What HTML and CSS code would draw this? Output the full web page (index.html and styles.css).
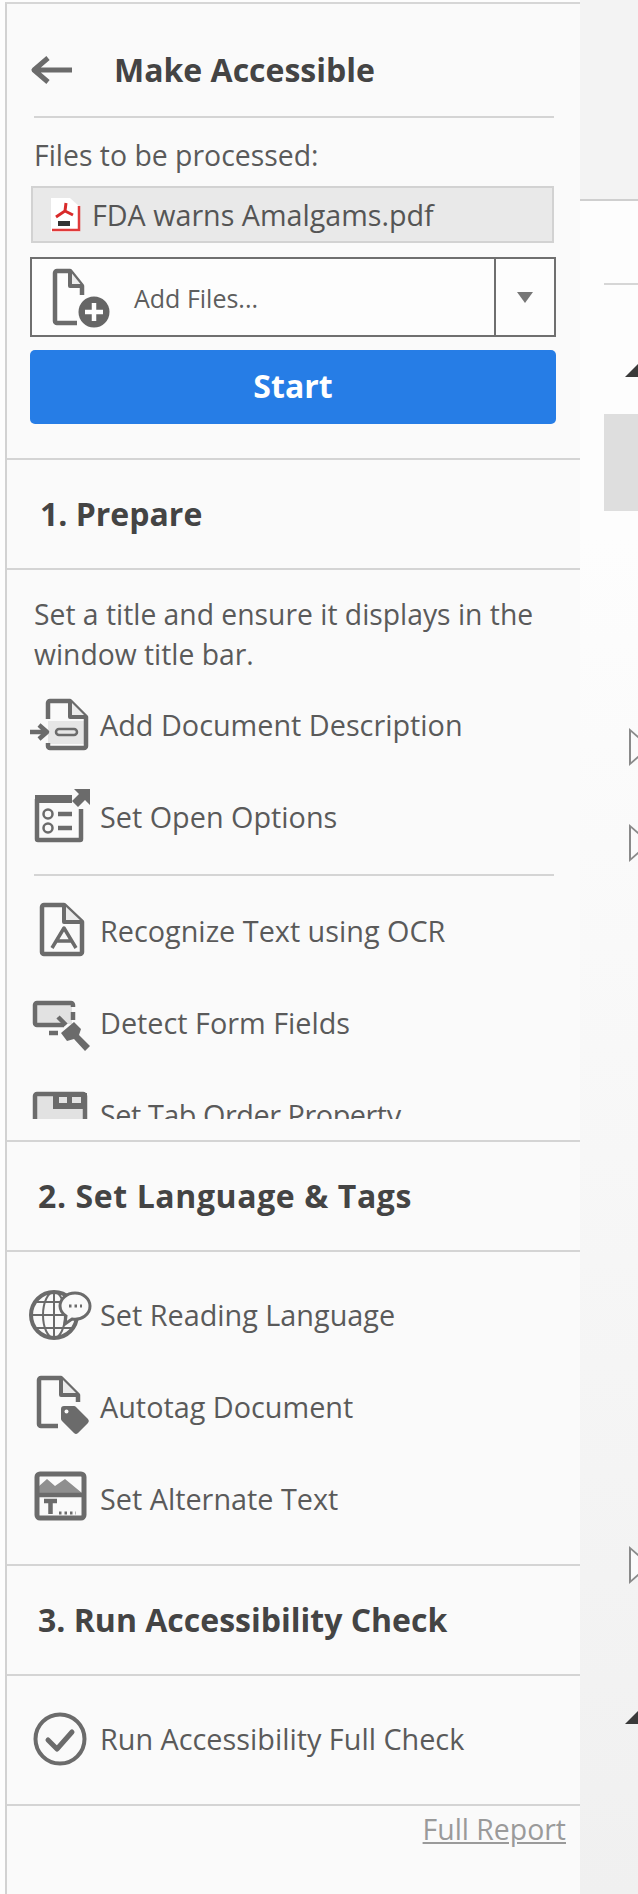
FILE: index.html
```html
<!DOCTYPE html>
<html lang="en">
<head>
<meta charset="utf-8">
<title>Make Accessible</title>
<link rel="stylesheet" href="styles.css">
</head>
<body>
<div class="app">
  <main class="panel">
    <header class="title-row">
      <svg class="back" viewBox="30 52 46 36"><path class="ln back-ln" d="M72 70H35M48 58L34 70L48 82"/></svg>
      <h1 class="title">Make Accessible</h1>
    </header>
    <div class="rule-inset"></div>
    <p class="label">Files to be processed:</p>
    <div class="file-box">
      <svg class="pdf" viewBox="46 196 34 40">
        <path d="M49 199H68L78 208V233H49Z" fill="#fff"/>
        <path d="M77 207V231H50" fill="none" stroke="#e03a3a" stroke-width="2.5"/>
        <path d="M64 204L63 212L54 218M63 212L71 216" fill="none" stroke="#d92a2a" stroke-width="3"/>
        <rect x="56" y="222" width="12" height="5" fill="#333"/>
      </svg>
      <span class="file-name">FDA warns Amalgams.pdf</span>
    </div>
    <div class="add-files">
      <div class="add-main">
        <svg class="add-icon" viewBox="50 266 62 64">
          <path class="ln" d="M82 296V287L70 272H57A2 2 0 0 0 55 274V322A2 2 0 0 0 57 324H77"/>
          <path class="fold" d="M70 272V287H82"/>
          <circle cx="94" cy="313" r="15.5" fill="#666"/>
          <path d="M94 304V322M85 313H103" stroke="#fff" stroke-width="4.5"/>
        </svg>
        <span class="add-text">Add Files...</span>
      </div>
      <div class="add-caret"><span class="caret"></span></div>
    </div>
    <button class="start">Start</button>
    <div class="spacer-start"></div>

    <h2 class="heading heading-first">1. Prepare</h2>
    <section class="body body-prepare">
      <p class="intro">Set a title and ensure it displays in the window title bar.</p>
      <div class="item">
        <svg class="ic" viewBox="29 693 63 64">
          <path d="M48 722H88V745H48Z" fill="#e6e6e6"/>
          <path class="ln" d="M48 720V704A2 2 0 0 1 50 702H70L86 718V747A2 2 0 0 1 84 749H50A2 2 0 0 1 48 747V744"/>
          <path class="fold" d="M70 702V718H86"/>
          <path class="ln" d="M30 733H46M39 726L47 733L39 740"/>
          <rect x="56" y="730" width="21" height="6" rx="3" fill="none" stroke="#6b6b6b" stroke-width="2.5"/>
        </svg>
        <span>Add Document Description</span>
      </div>
      <div class="item">
        <svg class="ic" viewBox="29 785 63 64">
          <path class="ln" d="M37 800V840A1 1 0 0 0 38 841H80A1 1 0 0 0 81 840V810"/>
          <path d="M35 796H72V804H35Z" fill="#6b6b6b"/>
          <path d="M74 790H90V806L85 801L78 808L72 802L79 795Z" fill="#6b6b6b"/>
          <circle cx="48" cy="815" r="4.5" fill="none" stroke="#6b6b6b" stroke-width="2.5"/>
          <circle cx="48" cy="829" r="4.5" fill="none" stroke="#6b6b6b" stroke-width="2.5"/>
          <path class="ln" d="M58 815H72M58 829H72"/>
        </svg>
        <span>Set Open Options</span>
      </div>
      <div class="rule-inset rule-items"></div>
      <div class="item">
        <svg class="ic" viewBox="29 899 63 64">
          <path class="ln" d="M42 908A2 2 0 0 1 44 906H64L82 923V953A2 2 0 0 1 80 955H44A2 2 0 0 1 42 953Z"/>
          <path class="fold" d="M64 906V923H82"/>
          <path class="ln thin" d="M52 949L64 929L76 949M56 942H72"/>
        </svg>
        <span>Recognize Text using OCR</span>
      </div>
      <div class="item">
        <svg class="ic" viewBox="29 991 63 64">
          <path d="M35 1004H72V1025H35Z" fill="#e2e2e2"/>
          <path class="ln" d="M64 1026H37A2 2 0 0 1 35 1024V1006A2 2 0 0 1 37 1004H71A2 2 0 0 1 73 1006V1008"/>
          <path class="ln" d="M73 1013V1021M49 1034H58M58 1018L66 1026"/>
          <path d="M74 1023L81 1030L79 1036L90 1047L85 1052L74 1040L67 1042L61 1034Z" fill="#6b6b6b"/>
        </svg>
        <span>Detect Form Fields</span>
      </div>
      <div class="item">
        <svg class="ic" viewBox="29 1083 63 64">
          <path d="M35 1096H55V1108H85V1130H35Z" fill="#e2e2e2"/>
          <path class="ln" d="M35 1130V1097A2 2 0 0 1 37 1095H83A2 2 0 0 1 85 1097V1130"/>
          <path d="M53 1094H87V1110H53Z" fill="#6b6b6b"/>
          <path d="M59 1098H67V1104H59ZM72 1098H81V1104H72Z" fill="#e4e4e4"/>
        </svg>
        <span class="tight">Set Tab Order Property</span>
      </div>
    </section>

    <h2 class="heading heading-wide">2. Set Language &amp; Tags</h2>
    <section class="body body-lang">
      <div class="item">
        <svg class="ic" viewBox="29 1284 63 64">
          <circle cx="54" cy="1317" r="23" fill="none" stroke="#6b6b6b" stroke-width="4"/>
          <path class="ln hair" d="M31 1317H77M35 1304H73M35 1330H73M54 1294V1340"/>
          <ellipse class="ln hair" cx="54" cy="1317" rx="11" ry="23"/>
          <path d="M60 1308A15 13 0 0 1 90 1308A15 13 0 0 1 72 1321L65 1326L66 1318A15 13 0 0 1 60 1308Z" fill="#fafafa" stroke="#6b6b6b" stroke-width="3"/>
          <path class="ln hair dots" d="M69 1308H82"/>
        </svg>
        <span>Set Reading Language</span>
      </div>
      <div class="item">
        <svg class="ic" viewBox="29 1376 63 64">
          <path class="ln" d="M58 1428H41A2 2 0 0 1 39 1426V1382A2 2 0 0 1 41 1380H61L78 1397V1404"/>
          <path class="fold" d="M61 1380V1397H78"/>
          <path d="M64 1408H74A3 3 0 0 1 76 1409L88 1421A3 3 0 0 1 88 1425L78 1435A3 3 0 0 1 74 1435L62 1423A3 3 0 0 1 61 1421V1411A3 3 0 0 1 64 1408Z" fill="#6b6b6b"/>
          <circle cx="66.500" cy="1413.500" r="2" fill="#fafafa"/>
        </svg>
        <span>Autotag Document</span>
      </div>
      <div class="item">
        <svg class="ic" viewBox="29 1468 63 64">
          <path d="M38 1495V1489L47 1481L55 1488L65 1481L82 1495Z" fill="#8f8f8f"/>
          <rect class="ln thick" x="37" y="1476" width="47" height="44" rx="3"/>
          <path class="ln" d="M37 1497H84"/>
          <path class="ln" d="M44 1503H57M50.500 1503V1516"/>
          <path class="ln dots" d="M59 1515H76"/>
        </svg>
        <span>Set Alternate Text</span>
      </div>
    </section>

    <h2 class="heading">3. Run Accessibility Check</h2>
    <section class="body body-check">
      <div class="item">
        <svg class="ic" viewBox="29 1707 63 64">
          <circle cx="60" cy="1740" r="24.500" fill="none" stroke="#6b6b6b" stroke-width="4"/>
          <path d="M48 1741L57 1750L72 1733" fill="none" stroke="#6b6b6b" stroke-width="5" stroke-linecap="round" stroke-linejoin="round"/>
        </svg>
        <span>Run Accessibility Full Check</span>
      </div>
    </section>
    <div class="rule-full"></div>
    <footer class="foot"><a class="report">Full Report</a></footer>
  </main>
  <aside class="side">
    <div class="side-top"></div>
    <div class="side-mid">
      <div class="side-line"></div>
      <span class="tri-solid tri-a"></span>
      <div class="side-block"></div>
      <span class="tri-open tri-b"></span>
      <span class="tri-open tri-c"></span>
      <span class="tri-open tri-d"></span>
      <span class="tri-solid tri-e"></span>
    </div>
  </aside>
</div>
</body>
</html>
```
FILE: styles.css
```css
* { box-sizing: border-box; }
html, body { margin: 0; padding: 0; background: #fdfdfd; }
body { font-family: "Open Sans", "Noto Sans", sans-serif; color: #5a5a5a; }
.app { display: flex; width: 638px; height: 1894px; overflow: hidden; }
.panel { width: 575px; margin-left: 5px; margin-top: 2px; height: 1892px; flex: none; background: #fafafa; border-left: 2px solid #d2d2d2; border-top: 2px solid #d6d6d6; }
.ln { fill: none; stroke: #6b6b6b; stroke-width: 4.5; stroke-linejoin: round; }
.fold { fill: #ececec; stroke: #6b6b6b; stroke-width: 4; stroke-linejoin: round; }
.back-ln { stroke-width: 5; }
.thick { stroke-width: 5; }
.thin { stroke-width: 3.5; }
.hair { stroke-width: 2; }
.dots { stroke-dasharray: 2.5 3; stroke-width: 3; }
.title-row { display: flex; align-items: center; height: 40px; margin-top: 46px; padding-left: 23px; }
.back { width: 46px; height: 36px; flex: none; }
.title { margin: 0 0 0 38px; font-size: 32px; line-height: 40px; font-weight: 700; color: #444; }
.rule-inset { height: 2px; margin: 26px 26px 0 27px; background: #d4d4d4; }
.label { margin: 17px 0 0 27px; font-size: 28.4px; line-height: 40px; }
.file-box { display: flex; align-items: center; height: 57px; margin: 11px 26px 0 24px; background: #e9e9e9; border: 2px solid #d2d2d2; padding-left: 15px; }
.pdf { width: 34px; height: 40px; flex: none; }
.file-name { margin-left: 10px; font-size: 28.7px; color: #555; }
.add-files { display: flex; height: 80px; margin: 14px 24px 0 23px; border: 2px solid #6f6f6f; background: #fdfdfd; }
.add-main { flex: 1; display: flex; align-items: center; padding-left: 18px; }
.add-icon { width: 62px; height: 64px; flex: none; }
.add-text { margin: 2px 0 0 22px; font-size: 25px; color: #5e5e5e; }
.add-caret { width: 60px; border-left: 2px solid #6f6f6f; display: flex; align-items: center; justify-content: center; }
.caret { width: 0; height: 0; border-left: 8px solid transparent; border-right: 8px solid transparent; border-top: 11px solid #777; }
.start { display: block; width: 526px; height: 74px; margin: 13px 0 0 23px; border: 0; border-radius: 5px; background: #267de6; color: #fff; font-family: inherit; font-size: 32px; font-weight: 700; line-height: 66px; padding: 0 0 2px; }
.spacer-start { height: 34px; }
.heading { display: flex; align-items: center; height: 112px; margin: 0; padding: 0 0 2px 31px; border-top: 2px solid #d4d4d4; border-bottom: 2px solid #d4d4d4; font-size: 32px; font-weight: 700; color: #444; }
.heading-first { padding-left: 33px; }
.heading-wide { letter-spacing: 0.6px; }
.body { font-size: 28.8px; }
.body-prepare { height: 549px; margin-bottom: 21px; padding-top: 24px; overflow: hidden; }
.intro { width: 520px; margin: 0 0 4px 27px; font-size: 28.3px; line-height: 40px; }
.item { display: flex; align-items: center; height: 92px; padding-left: 22px; }
.ic { width: 63px; height: 64px; flex: none; margin-right: 8px; }
.tight { letter-spacing: -0.45px; }
.rule-items { margin-top: 12px; margin-bottom: 8px; }
.body-lang { height: 312px; padding-top: 16px; }
.body-check { height: 128px; padding-top: 16px; }
.rule-full { height: 2px; background: #d4d4d4; }
.foot { display: flex; justify-content: flex-end; padding: 3px 14px 0 0; font-size: 28.4px; line-height: 40px; }
.report { color: #9a9a9a; text-decoration: underline; }
.side { flex: 1; display: flex; flex-direction: column; overflow: hidden; }
.side-top { height: 201px; flex: none; background: #f3f3f3; border-bottom: 2px solid #cfcfcf; }
.side-mid { flex: 1; display: flex; flex-direction: column; align-items: flex-start; padding-left: 24px; background: linear-gradient(#fdfdfd 0, #fdfdfd 20%, #f8f8f8 50%, #f0f0f0 100%); }
.side-line { width: 60px; height: 2px; flex: none; margin-top: 82px; background: #d6d6d6; }
.tri-solid { flex: none; width: 0; height: 0; margin-left: 21px; border-left: 14px solid transparent; border-bottom: 14px solid #3a3a3a; }
.tri-a { margin-top: 78px; }
.side-block { width: 60px; height: 97px; flex: none; margin-top: 37px; background: #dedede; }
.tri-open { flex: none; width: 0; height: 0; position: relative; margin-left: 25px; border-top: 19px solid transparent; border-bottom: 19px solid transparent; border-left: 22px solid #8a8a8a; }
.tri-open::after { content: ""; position: absolute; left: -20px; top: -15px; border-top: 15px solid transparent; border-bottom: 15px solid transparent; border-left: 17px solid #fbfbfb; }
.tri-b { margin-top: 217px; }
.tri-c { margin-top: 58px; }
.tri-d { margin-top: 684px; }
.tri-e { margin-top: 126px; }
```
